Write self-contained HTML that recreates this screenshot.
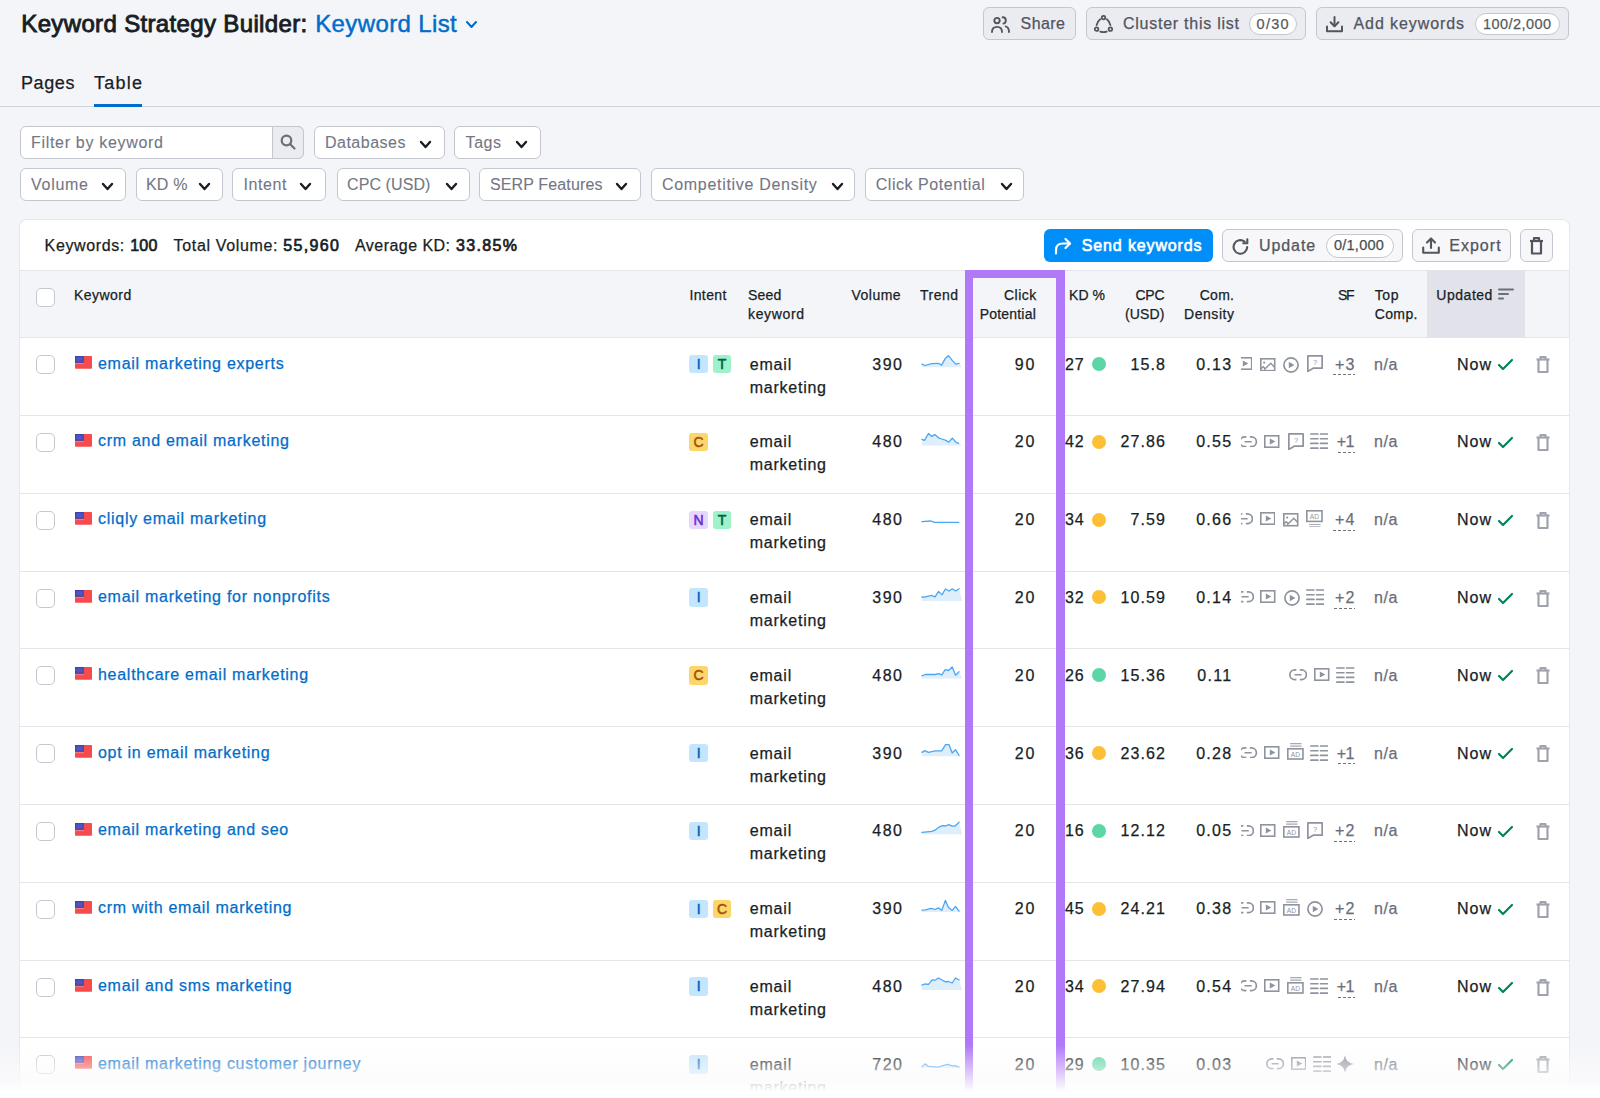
<!DOCTYPE html><html><head><meta charset="utf-8"><style>
html,body{margin:0;padding:0;}
body{width:1600px;height:1098px;overflow:hidden;position:relative;background:#f4f5f9;font-family:"Liberation Sans", sans-serif;}
.t{position:absolute;white-space:nowrap;line-height:1;-webkit-text-stroke-width:0.25px;}
svg{display:block;}
</style></head><body>
<div class="t" style="left:21.30px;top:12.18px;font-size:24px;font-weight:400;color:#181e25;letter-spacing:0.351px;-webkit-text-stroke:0.9px #181e25;">Keyword Strategy Builder:</div>
<div class="t" style="left:315.20px;top:12.18px;font-size:24px;font-weight:400;color:#006dca;letter-spacing:0.382px;-webkit-text-stroke:0.45px #006dca;">Keyword List</div>
<svg style="position:absolute;left:465px;top:19.5px;" width="13" height="9" viewBox="0 0 13 9" fill="none"><path d="M2 2 L6.5 7 L11 2" stroke="#006dca" stroke-width="2" stroke-linecap="round" stroke-linejoin="round"/></svg>
<div style="position:absolute;left:983px;top:7px;width:93px;height:33px;box-sizing:border-box;background:#ebecf1;border:1px solid #c4c7cf;border-radius:6px;"></div>
<svg style="position:absolute;left:991.25px;top:15.6px;" width="19" height="17" viewBox="0 0 19 17" fill="none"><g stroke="#52555e" stroke-width="1.9" stroke-linecap="round" fill="none"><circle cx="6" cy="4.6" r="2.7"/><path d="M1 16 C1 12.6 3 10.9 6 10.9 C9 10.9 11 12.6 11 16"/><path d="M11.6 1.2 C13.6 1.2 14.8 2.6 14.8 4.4 C14.8 6 13.8 7.2 12.4 7.6"/><path d="M14.7 10.4 C16.8 11.1 18 12.8 18 16"/></g></svg>
<div class="t" style="left:1020.60px;top:16.46px;font-size:16px;font-weight:400;color:#52555e;letter-spacing:0.428px;">Share</div>
<div style="position:absolute;left:1086px;top:7px;width:220px;height:33px;box-sizing:border-box;background:#ebecf1;border:1px solid #c4c7cf;border-radius:6px;"></div>
<svg style="position:absolute;left:1094.4px;top:14.75px;" width="19" height="18" viewBox="0 0 19 18" fill="none"><g stroke="#52555e" stroke-width="1.8" stroke-linecap="round" fill="none"><circle cx="9.5" cy="2.6" r="1.75"/><circle cx="2.6" cy="14.2" r="1.75"/><circle cx="16.4" cy="14.2" r="1.75"/><path d="M6.2 4.2 Q3.2 6.5 2.6 10.2"/><path d="M12.8 4.2 Q15.8 6.5 16.4 10.2"/><path d="M6.3 16.6 Q9.5 17.6 12.7 16.6"/></g></svg>
<div class="t" style="left:1123.00px;top:16.46px;font-size:16px;font-weight:400;color:#52555e;letter-spacing:0.749px;">Cluster this list</div>
<div style="position:absolute;left:1249px;top:12.5px;width:48px;height:22.5px;box-sizing:border-box;background:#fff;border:1px solid #c4c7cf;border-radius:12px;"></div>
<div class="t" style="left:1256.60px;top:16.73px;font-size:14.5px;font-weight:400;color:#181e25;letter-spacing:1.261px;opacity:.75">0/30</div>
<div style="position:absolute;left:1316px;top:7px;width:253px;height:33px;box-sizing:border-box;background:#ebecf1;border:1px solid #c4c7cf;border-radius:6px;"></div>
<svg style="position:absolute;left:1326px;top:16px;" width="17" height="16.5" viewBox="0 0 17 16.5" fill="none"><g stroke="#52555e" stroke-width="2" stroke-linecap="round" stroke-linejoin="round" fill="none"><path d="M8.5 1 V10"/><path d="M4.6 6.3 L8.5 10.2 L12.4 6.3"/><path d="M1 10.5 V15.3 H16 V10.5"/></g></svg>
<div class="t" style="left:1353.50px;top:16.46px;font-size:16px;font-weight:400;color:#52555e;letter-spacing:0.909px;">Add keywords</div>
<div style="position:absolute;left:1475px;top:12.5px;width:85px;height:22.5px;box-sizing:border-box;background:#fff;border:1px solid #c4c7cf;border-radius:12px;"></div>
<div class="t" style="left:1483.00px;top:16.73px;font-size:14.5px;font-weight:400;color:#181e25;letter-spacing:0.436px;opacity:.75">100/2,000</div>
<div class="t" style="left:21.00px;top:73.76px;font-size:18px;font-weight:400;color:#181e25;letter-spacing:0.593px;">Pages</div>
<div class="t" style="left:94.00px;top:73.76px;font-size:18px;font-weight:400;color:#181e25;letter-spacing:1.241px;">Table</div>
<div style="position:absolute;left:0px;top:106px;width:1600px;height:1px;box-sizing:border-box;background:#d1d4db;"></div>
<div style="position:absolute;left:94px;top:104px;width:48px;height:3px;box-sizing:border-box;background:#006dca;"></div>
<div style="position:absolute;left:20px;top:126px;width:284px;height:32.5px;box-sizing:border-box;background:#fff;border:1px solid #c4c7cf;border-radius:6px;"></div>
<div style="position:absolute;left:272px;top:126px;width:32px;height:32.5px;box-sizing:border-box;background:#ebecf1;border:1px solid #c4c7cf;border-left:1px solid #c4c7cf;border-radius:0 6px 6px 0;"></div>
<div class="t" style="left:31.00px;top:134.66px;font-size:16px;font-weight:400;color:#737784;letter-spacing:0.692px;-webkit-text-stroke-width:0.1px;">Filter by keyword</div>
<svg style="position:absolute;left:279px;top:133px;" width="18" height="18" viewBox="0 0 18 18" fill="none"><g stroke="#6c6e79" stroke-width="2.2" stroke-linecap="round"><circle cx="7.5" cy="7.5" r="4.8"/><path d="M11 11 L15.5 15.5"/></g></svg>
<div style="position:absolute;left:314px;top:126px;width:130.5px;height:32.5px;box-sizing:border-box;background:#fff;border:1px solid #c4c7cf;border-radius:6px;"></div>
<div class="t" style="left:325.00px;top:134.66px;font-size:16px;font-weight:400;color:#737784;letter-spacing:0.488px;-webkit-text-stroke-width:0.1px;">Databases</div>
<svg style="position:absolute;left:419px;top:139.5px;" width="13" height="9" viewBox="0 0 13 9" fill="none"><path d="M2 2 L6.5 7 L11 2" stroke="#181e25" stroke-width="2.4" stroke-linecap="round" stroke-linejoin="round"/></svg>
<div style="position:absolute;left:454px;top:126px;width:86.5px;height:32.5px;box-sizing:border-box;background:#fff;border:1px solid #c4c7cf;border-radius:6px;"></div>
<div class="t" style="left:465.60px;top:134.66px;font-size:16px;font-weight:400;color:#737784;letter-spacing:0.536px;-webkit-text-stroke-width:0.1px;">Tags</div>
<svg style="position:absolute;left:515px;top:139.5px;" width="13" height="9" viewBox="0 0 13 9" fill="none"><path d="M2 2 L6.5 7 L11 2" stroke="#181e25" stroke-width="2.4" stroke-linecap="round" stroke-linejoin="round"/></svg>
<div style="position:absolute;left:20px;top:168px;width:105.5px;height:32.5px;box-sizing:border-box;background:#fff;border:1px solid #c4c7cf;border-radius:6px;"></div>
<div class="t" style="left:31.10px;top:176.66px;font-size:16px;font-weight:400;color:#737784;letter-spacing:0.708px;-webkit-text-stroke-width:0.1px;">Volume</div>
<svg style="position:absolute;left:101px;top:181.5px;" width="13" height="9" viewBox="0 0 13 9" fill="none"><path d="M2 2 L6.5 7 L11 2" stroke="#181e25" stroke-width="2.4" stroke-linecap="round" stroke-linejoin="round"/></svg>
<div style="position:absolute;left:135.5px;top:168px;width:87.0px;height:32.5px;box-sizing:border-box;background:#fff;border:1px solid #c4c7cf;border-radius:6px;"></div>
<div class="t" style="left:145.90px;top:176.66px;font-size:16px;font-weight:400;color:#737784;letter-spacing:0.201px;-webkit-text-stroke-width:0.1px;">KD %</div>
<svg style="position:absolute;left:198px;top:181.5px;" width="13" height="9" viewBox="0 0 13 9" fill="none"><path d="M2 2 L6.5 7 L11 2" stroke="#181e25" stroke-width="2.4" stroke-linecap="round" stroke-linejoin="round"/></svg>
<div style="position:absolute;left:232px;top:168px;width:93.5px;height:32.5px;box-sizing:border-box;background:#fff;border:1px solid #c4c7cf;border-radius:6px;"></div>
<div class="t" style="left:243.60px;top:176.66px;font-size:16px;font-weight:400;color:#737784;letter-spacing:0.554px;-webkit-text-stroke-width:0.1px;">Intent</div>
<svg style="position:absolute;left:299px;top:181.5px;" width="13" height="9" viewBox="0 0 13 9" fill="none"><path d="M2 2 L6.5 7 L11 2" stroke="#181e25" stroke-width="2.4" stroke-linecap="round" stroke-linejoin="round"/></svg>
<div style="position:absolute;left:336.5px;top:168px;width:133.0px;height:32.5px;box-sizing:border-box;background:#fff;border:1px solid #c4c7cf;border-radius:6px;"></div>
<div class="t" style="left:347.00px;top:176.66px;font-size:16px;font-weight:400;color:#737784;letter-spacing:0.091px;-webkit-text-stroke-width:0.1px;">CPC (USD)</div>
<svg style="position:absolute;left:445px;top:181.5px;" width="13" height="9" viewBox="0 0 13 9" fill="none"><path d="M2 2 L6.5 7 L11 2" stroke="#181e25" stroke-width="2.4" stroke-linecap="round" stroke-linejoin="round"/></svg>
<div style="position:absolute;left:479px;top:168px;width:162px;height:32.5px;box-sizing:border-box;background:#fff;border:1px solid #c4c7cf;border-radius:6px;"></div>
<div class="t" style="left:490.00px;top:176.66px;font-size:16px;font-weight:400;color:#737784;letter-spacing:0.128px;-webkit-text-stroke-width:0.1px;">SERP Features</div>
<svg style="position:absolute;left:615px;top:181.5px;" width="13" height="9" viewBox="0 0 13 9" fill="none"><path d="M2 2 L6.5 7 L11 2" stroke="#181e25" stroke-width="2.4" stroke-linecap="round" stroke-linejoin="round"/></svg>
<div style="position:absolute;left:651px;top:168px;width:204px;height:32.5px;box-sizing:border-box;background:#fff;border:1px solid #c4c7cf;border-radius:6px;"></div>
<div class="t" style="left:662.00px;top:176.66px;font-size:16px;font-weight:400;color:#737784;letter-spacing:0.696px;-webkit-text-stroke-width:0.1px;">Competitive Density</div>
<svg style="position:absolute;left:831px;top:181.5px;" width="13" height="9" viewBox="0 0 13 9" fill="none"><path d="M2 2 L6.5 7 L11 2" stroke="#181e25" stroke-width="2.4" stroke-linecap="round" stroke-linejoin="round"/></svg>
<div style="position:absolute;left:865px;top:168px;width:159px;height:32.5px;box-sizing:border-box;background:#fff;border:1px solid #c4c7cf;border-radius:6px;"></div>
<div class="t" style="left:875.70px;top:176.66px;font-size:16px;font-weight:400;color:#737784;letter-spacing:0.552px;-webkit-text-stroke-width:0.1px;">Click Potential</div>
<svg style="position:absolute;left:1000px;top:181.5px;" width="13" height="9" viewBox="0 0 13 9" fill="none"><path d="M2 2 L6.5 7 L11 2" stroke="#181e25" stroke-width="2.4" stroke-linecap="round" stroke-linejoin="round"/></svg>
<div style="position:absolute;left:19px;top:219px;width:1551px;height:891px;box-sizing:border-box;background:#fff;border:1px solid #e6e7ec;border-radius:8px 8px 0 0;"></div>
<div class="t" style="left:44.60px;top:237.96px;font-size:16px;font-weight:400;color:#181e25;letter-spacing:0.626px;">Keywords:</div>
<div class="t" style="left:130.30px;top:237.96px;font-size:16px;font-weight:400;color:#181e25;letter-spacing:0.156px;-webkit-text-stroke:0.7px #181e25;">100</div>
<div class="t" style="left:173.60px;top:237.96px;font-size:16px;font-weight:400;color:#181e25;letter-spacing:0.654px;">Total Volume:</div>
<div class="t" style="left:283.30px;top:237.96px;font-size:16px;font-weight:400;color:#181e25;letter-spacing:1.351px;-webkit-text-stroke:0.7px #181e25;">55,960</div>
<div class="t" style="left:355.00px;top:237.96px;font-size:16px;font-weight:400;color:#181e25;letter-spacing:0.458px;">Average KD:</div>
<div class="t" style="left:455.90px;top:237.96px;font-size:16px;font-weight:400;color:#181e25;letter-spacing:1.386px;-webkit-text-stroke:0.7px #181e25;">33.85%</div>
<div style="position:absolute;left:1044px;top:229px;width:168.5px;height:33px;box-sizing:border-box;background:#008ff8;border-radius:6px;"></div>
<svg style="position:absolute;left:1053px;top:236px;" width="20" height="20" viewBox="0 0 20 20" fill="none"><g stroke="#fff" stroke-width="2.2" stroke-linecap="round" stroke-linejoin="round"><path d="M3 17.5 V14 C3 9.5 6 7.5 10 7.5 H17"/><path d="M12.5 3 L17 7.5 L12.5 12"/></g></svg>
<div class="t" style="left:1081.80px;top:237.96px;font-size:16px;font-weight:400;color:#fff;letter-spacing:0.859px;-webkit-text-stroke:0.6px #fff;">Send keywords</div>
<div style="position:absolute;left:1222px;top:229px;width:180.5px;height:33px;box-sizing:border-box;background:#f7f7f9;border:1px solid #c4c7cf;border-radius:6px;"></div>
<svg style="position:absolute;left:1231.5px;top:237.5px;" width="18" height="17" viewBox="0 0 18 17" fill="none"><g stroke="#52555e" stroke-width="2.1" stroke-linecap="round" stroke-linejoin="round" fill="none"><path d="M15.2 9 A6.8 6.8 0 1 1 12.6 3.6"/><path d="M15.3 1.2 V5.2 H11.3"/></g></svg>
<div class="t" style="left:1258.90px;top:237.96px;font-size:16px;font-weight:400;color:#52555e;letter-spacing:0.940px;">Update</div>
<div style="position:absolute;left:1325.5px;top:233.5px;width:68.0px;height:24.0px;box-sizing:border-box;background:#fff;border:1px solid #c4c7cf;border-radius:12px;"></div>
<div class="t" style="left:1333.90px;top:238.23px;font-size:14.5px;font-weight:400;color:#181e25;letter-spacing:0.271px;opacity:.8">0/1,000</div>
<div style="position:absolute;left:1412px;top:229px;width:99px;height:33px;box-sizing:border-box;background:#f7f7f9;border:1px solid #c4c7cf;border-radius:6px;"></div>
<svg style="position:absolute;left:1422px;top:237px;" width="18" height="17" viewBox="0 0 18 17" fill="none"><g stroke="#52555e" stroke-width="2.1" stroke-linecap="round" stroke-linejoin="round" fill="none"><path d="M9 11 V1.8"/><path d="M5 5.6 L9 1.6 L13 5.6"/><path d="M1.2 10.6 V15.8 H16.8 V10.6"/></g></svg>
<div class="t" style="left:1449.20px;top:237.96px;font-size:16px;font-weight:400;color:#52555e;letter-spacing:1.032px;">Export</div>
<div style="position:absolute;left:1520px;top:229px;width:33px;height:33px;box-sizing:border-box;background:#f7f7f9;border:1px solid #c4c7cf;border-radius:6px;"></div>
<svg style="position:absolute;left:1526px;top:235px;" width="21" height="22" viewBox="0 0 21 22" fill="none"><g stroke="#52555e" stroke-width="2.2" stroke-linejoin="round"><path d="M4 6 H17"/><path d="M8 5.5 V3.2 H13 V5.5"/><path d="M6 6 V18.5 H15 V6"/></g></svg>
<div style="position:absolute;left:20px;top:270px;width:1549px;height:1px;box-sizing:border-box;background:#e4e5ea;"></div>
<div style="position:absolute;left:20px;top:271px;width:1549px;height:66px;box-sizing:border-box;background:#f4f5f9;"></div>
<div style="position:absolute;left:1427px;top:271px;width:98px;height:66px;box-sizing:border-box;background:#e1e2ea;"></div>
<div style="position:absolute;left:20px;top:337px;width:1549px;height:1px;box-sizing:border-box;background:#e4e5ea;"></div>
<div style="position:absolute;left:36px;top:288px;width:19px;height:19px;box-sizing:border-box;background:#fff;border:1.5px solid #c4c7cf;border-radius:5px;"></div>
<div class="t" style="left:73.90px;top:288.15px;font-size:14px;font-weight:400;color:#181e25;letter-spacing:0.471px;">Keyword</div>
<div class="t" style="left:689.40px;top:288.15px;font-size:14px;font-weight:400;color:#181e25;letter-spacing:0.394px;">Intent</div>
<div class="t" style="left:748.00px;top:288.15px;font-size:14px;font-weight:400;color:#181e25;letter-spacing:0.237px;">Seed</div>
<div class="t" style="left:748.00px;top:306.75px;font-size:14px;font-weight:400;color:#181e25;letter-spacing:0.644px;">keyword</div>
<div class="t" style="left:851.60px;top:288.15px;font-size:14px;font-weight:400;color:#181e25;letter-spacing:0.462px;">Volume</div>
<div class="t" style="left:920.00px;top:288.15px;font-size:14px;font-weight:400;color:#181e25;letter-spacing:0.487px;">Trend</div>
<div class="t" style="left:1004.00px;top:288.15px;font-size:14px;font-weight:400;color:#181e25;letter-spacing:0.459px;">Click</div>
<div class="t" style="left:979.70px;top:306.75px;font-size:14px;font-weight:400;color:#181e25;letter-spacing:0.201px;">Potential</div>
<div class="t" style="left:1069.00px;top:288.15px;font-size:14px;font-weight:400;color:#181e25;letter-spacing:0.072px;">KD %</div>
<div class="t" style="left:1135.50px;top:288.15px;font-size:14px;font-weight:400;color:#181e25;letter-spacing:-0.277px;">CPC</div>
<div class="t" style="left:1125.00px;top:306.75px;font-size:14px;font-weight:400;color:#181e25;letter-spacing:0.155px;">(USD)</div>
<div class="t" style="left:1199.70px;top:288.15px;font-size:14px;font-weight:400;color:#181e25;letter-spacing:0.285px;">Com.</div>
<div class="t" style="left:1184.00px;top:306.75px;font-size:14px;font-weight:400;color:#181e25;letter-spacing:0.554px;">Density</div>
<div class="t" style="left:1338.00px;top:288.15px;font-size:14px;font-weight:400;color:#181e25;letter-spacing:-1.392px;">SF</div>
<div class="t" style="left:1374.70px;top:288.15px;font-size:14px;font-weight:400;color:#181e25;letter-spacing:0.616px;">Top</div>
<div class="t" style="left:1374.70px;top:306.75px;font-size:14px;font-weight:400;color:#181e25;letter-spacing:0.392px;">Comp.</div>
<div class="t" style="left:1436.30px;top:288.15px;font-size:14px;font-weight:400;color:#181e25;letter-spacing:0.528px;">Updated</div>
<svg style="position:absolute;left:1498px;top:287.5px;" width="17" height="12" viewBox="0 0 17 12" fill="none"><g stroke="#6c6e79" stroke-width="2" stroke-linecap="round"><path d="M1 1.5 H15"/><path d="M1 6 H10"/><path d="M1 10.5 H5"/></g></svg>
<div style="position:absolute;left:36px;top:355.1px;width:19px;height:19.0px;box-sizing:border-box;background:#fff;border:1.5px solid #c4c7cf;border-radius:5px;"></div>
<svg style="position:absolute;left:75px;top:356.1px;" width="17" height="13" viewBox="0 0 17 13" fill="none"><rect width="17" height="12.7" rx="0.8" fill="#f54b4d"/><rect x="0" y="7.3" width="9" height="0.8" fill="#f88"/><rect width="8.8" height="6.8" fill="#3f42b4"/><rect x="1.2" y="1.2" width="6.4" height="4.4" fill="#5255bd"/></svg>
<div class="t" style="left:98.00px;top:355.56px;font-size:16px;font-weight:400;color:#006dca;letter-spacing:0.720px;">email marketing experts</div>
<div style="position:absolute;left:689.4px;top:354.90000000000003px;width:18.5px;height:18.5px;border-radius:3px;background:#c4e5fe;color:#0a5dc2;font-size:14px;font-weight:400;-webkit-text-stroke:0.55px #0a5dc2;line-height:19px;text-align:center;">I</div>
<div style="position:absolute;left:712.9px;top:354.90000000000003px;width:18.5px;height:18.5px;border-radius:3px;background:#9ef2c9;color:#00604b;font-size:14px;font-weight:400;-webkit-text-stroke:0.55px #00604b;line-height:19px;text-align:center;">T</div>
<div class="t" style="left:749.80px;top:356.56px;font-size:16px;font-weight:400;color:#181e25;letter-spacing:0.800px;">email</div>
<div class="t" style="left:749.80px;top:379.56px;font-size:16px;font-weight:400;color:#181e25;letter-spacing:0.743px;">marketing</div>
<div class="t" style="left:872.31px;top:356.56px;font-size:16px;font-weight:400;color:#181e25;letter-spacing:1.500px;">390</div>
<svg style="position:absolute;left:915px;top:340px;" width="50" height="40" viewBox="0 0 50 40" fill="none"><polygon points="6.9,24.1 10.2,25.5 16.4,23.7 23.3,23.3 26.6,25.1 30.2,18.6 33.5,15.7 37.2,20.4 40.8,24.1 44.1,23.3 47,27.3 6.9,27.3" fill="#dfeefb"/><polyline points="6.9,24.1 10.2,25.5 16.4,23.7 23.3,23.3 26.6,25.1 30.2,18.6 33.5,15.7 37.2,20.4 40.8,24.1 44.1,23.3" stroke="#4aa6f4" stroke-width="1.3" stroke-linejoin="round" stroke-linecap="round" fill="none"/></svg>
<div class="t" style="left:1014.71px;top:356.56px;font-size:16px;font-weight:400;color:#181e25;letter-spacing:2.000px;">90</div>
<div class="t" style="left:1065.00px;top:356.56px;font-size:16px;font-weight:400;color:#181e25;letter-spacing:0.800px;">27</div>
<div style="position:absolute;left:1092px;top:356.90000000000003px;width:14px;height:14px;border-radius:50%;background:#5cd6a5;"></div>
<div class="t" style="left:1130.56px;top:356.56px;font-size:16px;font-weight:400;color:#181e25;letter-spacing:1.100px;">15.8</div>
<div class="t" style="left:1196.16px;top:356.56px;font-size:16px;font-weight:400;color:#181e25;letter-spacing:1.300px;">0.13</div>
<div class="t" style="left:1334.96px;top:356.56px;font-size:16px;font-weight:400;color:#6c6e79;letter-spacing:1.300px;">+3</div>
<div style="position:absolute;left:1333.4px;top:374.1px;width:21.3px;height:1px;background:repeating-linear-gradient(to right,#6f727d 0 3px,transparent 3px 5px);"></div>
<div style="position:absolute;left:1241px;top:347.1px;width:119px;height:40px;overflow:hidden;">
<svg style="position:absolute;left:-4.35px;top:9.75px;" width="15.5" height="13" viewBox="0 0 15.5 13" fill="none"><rect x="0.8" y="0.8" width="13.9" height="11.4" stroke="#8f939e" stroke-width="1.6"/><path d="M5.8 3.4 L11.4 6.5 L5.8 9.6 Z" fill="#8f939e"/></svg>
<svg style="position:absolute;left:19.15px;top:10.5px;" width="15.5" height="13.5" viewBox="0 0 15.5 13.5" fill="none"><rect x="0.8" y="0.8" width="13.9" height="11.9" stroke="#8f939e" stroke-width="1.6"/><path d="M1.2 10.6 L3.2 8.8 L5.3 10.8 M4.2 11.8 L10.8 5.3 L14.3 9" stroke="#8f939e" stroke-width="1.5"/><circle cx="4.2" cy="4.6" r="1.1" fill="#8f939e"/></svg>
<svg style="position:absolute;left:42.40px;top:9.5px;" width="16" height="16" viewBox="0 0 16 16" fill="none"><circle cx="8" cy="8" r="7.1" stroke="#8f939e" stroke-width="1.7"/><path d="M5.8 4.8 L11.4 8 L5.8 11.2 Z" fill="#8f939e"/></svg>
<svg style="position:absolute;left:65.90px;top:8.25px;" width="16" height="17" viewBox="0 0 16 17" fill="none"><path d="M0.85 0.85 H15.15 V13.2 H6.2 L0.85 16.4 Z" stroke="#8f939e" stroke-width="1.7" stroke-linejoin="round"/><text x="8.2" y="10.2" font-size="7.5" text-anchor="middle" fill="#8f939e" font-family="Liberation Sans">?</text></svg>
</div>
<div class="t" style="left:1374.00px;top:356.56px;font-size:16px;font-weight:400;color:#6c6e79;letter-spacing:0.522px;">n/a</div>
<div class="t" style="left:1457.00px;top:356.56px;font-size:16px;font-weight:400;color:#181e25;letter-spacing:0.976px;">Now</div>
<svg style="position:absolute;left:1497px;top:358.1px;" width="17" height="13" viewBox="0 0 17 13" fill="none"><path d="M2 7 L6 11 L15 2" stroke="#00845a" stroke-width="2.2" stroke-linecap="round" stroke-linejoin="round"/></svg>
<svg style="position:absolute;left:1534px;top:355.1px;" width="18" height="20" viewBox="0 0 18 20" fill="none"><g stroke="#a0a3ad" stroke-width="2.2" stroke-linejoin="round"><path d="M2.5 4.5 H15.5"/><path d="M6.5 4 V2 H11.5 V4"/><path d="M4.5 4.5 V17 H13.5 V4.5"/></g></svg>
<div style="position:absolute;left:20px;top:414.9px;width:1549px;height:1.0px;box-sizing:border-box;background:#e4e5ea;"></div>
<div style="position:absolute;left:36px;top:432.9px;width:19px;height:19.0px;box-sizing:border-box;background:#fff;border:1.5px solid #c4c7cf;border-radius:5px;"></div>
<svg style="position:absolute;left:75px;top:433.9px;" width="17" height="13" viewBox="0 0 17 13" fill="none"><rect width="17" height="12.7" rx="0.8" fill="#f54b4d"/><rect x="0" y="7.3" width="9" height="0.8" fill="#f88"/><rect width="8.8" height="6.8" fill="#3f42b4"/><rect x="1.2" y="1.2" width="6.4" height="4.4" fill="#5255bd"/></svg>
<div class="t" style="left:98.00px;top:433.36px;font-size:16px;font-weight:400;color:#006dca;letter-spacing:0.720px;">crm and email marketing</div>
<div style="position:absolute;left:689.4px;top:432.7px;width:18.5px;height:18.5px;border-radius:3px;background:#fcd66b;color:#a3530a;font-size:14px;font-weight:400;-webkit-text-stroke:0.55px #a3530a;line-height:19px;text-align:center;">C</div>
<div class="t" style="left:749.80px;top:434.36px;font-size:16px;font-weight:400;color:#181e25;letter-spacing:0.800px;">email</div>
<div class="t" style="left:749.80px;top:457.36px;font-size:16px;font-weight:400;color:#181e25;letter-spacing:0.743px;">marketing</div>
<div class="t" style="left:872.31px;top:434.36px;font-size:16px;font-weight:400;color:#181e25;letter-spacing:1.500px;">480</div>
<svg style="position:absolute;left:915px;top:420px;" width="50" height="40" viewBox="0 0 50 40" fill="none"><polygon points="6.9,19.3 9.5,20.4 13.5,13.5 16.8,16.4 19.9,14.6 23.7,17.9 26.6,19.0 31.0,20.4 33.5,22.2 37.4,18.2 40.8,22.2 43.7,23.3 47,25.5 6.9,25.5" fill="#dfeefb"/><polyline points="6.9,19.3 9.5,20.4 13.5,13.5 16.8,16.4 19.9,14.6 23.7,17.9 26.6,19.0 31.0,20.4 33.5,22.2 37.4,18.2 40.8,22.2 43.7,23.3" stroke="#4aa6f4" stroke-width="1.3" stroke-linejoin="round" stroke-linecap="round" fill="none"/></svg>
<div class="t" style="left:1014.71px;top:434.36px;font-size:16px;font-weight:400;color:#181e25;letter-spacing:2.000px;">20</div>
<div class="t" style="left:1065.00px;top:434.36px;font-size:16px;font-weight:400;color:#181e25;letter-spacing:0.800px;">42</div>
<div style="position:absolute;left:1092px;top:434.7px;width:14px;height:14px;border-radius:50%;background:#fdbf33;"></div>
<div class="t" style="left:1120.57px;top:434.36px;font-size:16px;font-weight:400;color:#181e25;letter-spacing:1.100px;">27.86</div>
<div class="t" style="left:1196.16px;top:434.36px;font-size:16px;font-weight:400;color:#181e25;letter-spacing:1.300px;">0.55</div>
<div class="t" style="left:1336.86px;top:434.36px;font-size:16px;font-weight:400;color:#6c6e79;letter-spacing:-0.600px;">+1</div>
<div style="position:absolute;left:1337.5px;top:451.9px;width:17.2px;height:1px;background:repeating-linear-gradient(to right,#6f727d 0 3px,transparent 3px 5px);"></div>
<div style="position:absolute;left:1241px;top:424.9px;width:119px;height:40px;overflow:hidden;">
<svg style="position:absolute;left:-1.62px;top:10.75px;" width="18.25" height="11.5" viewBox="0 0 18.25 11.5" fill="none"><path d="M7.4 0.85 H5.75 A4.9 4.9 0 0 0 5.75 10.65 H7.4" stroke="#8f939e" stroke-width="1.7"/><path d="M10.85 0.85 H12.5 A4.9 4.9 0 0 1 12.5 10.65 H10.85" stroke="#8f939e" stroke-width="1.7"/><path d="M6.2 5.75 H12" stroke="#8f939e" stroke-width="1.7" stroke-linecap="round"/></svg>
<svg style="position:absolute;left:23.25px;top:9.75px;" width="15.5" height="13" viewBox="0 0 15.5 13" fill="none"><rect x="0.8" y="0.8" width="13.9" height="11.4" stroke="#8f939e" stroke-width="1.6"/><path d="M5.8 3.4 L11.4 6.5 L5.8 9.6 Z" fill="#8f939e"/></svg>
<svg style="position:absolute;left:46.50px;top:8.25px;" width="16" height="17" viewBox="0 0 16 17" fill="none"><path d="M0.85 0.85 H15.15 V13.2 H6.2 L0.85 16.4 Z" stroke="#8f939e" stroke-width="1.7" stroke-linejoin="round"/><text x="8.2" y="10.2" font-size="7.5" text-anchor="middle" fill="#8f939e" font-family="Liberation Sans">?</text></svg>
<svg style="position:absolute;left:68.75px;top:8.5px;" width="18.5" height="16" viewBox="0 0 18.5 16" fill="none"><path d="M0.85 1 H7.9 M10.6 1 H17.65 M0.85 5.75 H7.9 M10.6 5.75 H17.65 M0.85 10.4 H7.9 M10.6 10.4 H17.65 M0.85 15.2 H7.9 M10.6 15.2 H17.65" stroke="#8f939e" stroke-width="1.7" stroke-linecap="round"/></svg>
</div>
<div class="t" style="left:1374.00px;top:434.36px;font-size:16px;font-weight:400;color:#6c6e79;letter-spacing:0.522px;">n/a</div>
<div class="t" style="left:1457.00px;top:434.36px;font-size:16px;font-weight:400;color:#181e25;letter-spacing:0.976px;">Now</div>
<svg style="position:absolute;left:1497px;top:435.9px;" width="17" height="13" viewBox="0 0 17 13" fill="none"><path d="M2 7 L6 11 L15 2" stroke="#00845a" stroke-width="2.2" stroke-linecap="round" stroke-linejoin="round"/></svg>
<svg style="position:absolute;left:1534px;top:432.9px;" width="18" height="20" viewBox="0 0 18 20" fill="none"><g stroke="#a0a3ad" stroke-width="2.2" stroke-linejoin="round"><path d="M2.5 4.5 H15.5"/><path d="M6.5 4 V2 H11.5 V4"/><path d="M4.5 4.5 V17 H13.5 V4.5"/></g></svg>
<div style="position:absolute;left:20px;top:492.7px;width:1549px;height:1.0px;box-sizing:border-box;background:#e4e5ea;"></div>
<div style="position:absolute;left:36px;top:510.7px;width:19px;height:19.000000000000057px;box-sizing:border-box;background:#fff;border:1.5px solid #c4c7cf;border-radius:5px;"></div>
<svg style="position:absolute;left:75px;top:511.7px;" width="17" height="13" viewBox="0 0 17 13" fill="none"><rect width="17" height="12.7" rx="0.8" fill="#f54b4d"/><rect x="0" y="7.3" width="9" height="0.8" fill="#f88"/><rect width="8.8" height="6.8" fill="#3f42b4"/><rect x="1.2" y="1.2" width="6.4" height="4.4" fill="#5255bd"/></svg>
<div class="t" style="left:98.00px;top:511.16px;font-size:16px;font-weight:400;color:#006dca;letter-spacing:0.720px;">cliqly email marketing</div>
<div style="position:absolute;left:689.4px;top:510.5px;width:18.5px;height:18.5px;border-radius:3px;background:#e6d8fc;color:#6b2edb;font-size:14px;font-weight:400;-webkit-text-stroke:0.55px #6b2edb;line-height:19px;text-align:center;">N</div>
<div style="position:absolute;left:712.9px;top:510.5px;width:18.5px;height:18.5px;border-radius:3px;background:#9ef2c9;color:#00604b;font-size:14px;font-weight:400;-webkit-text-stroke:0.55px #00604b;line-height:19px;text-align:center;">T</div>
<div class="t" style="left:749.80px;top:512.16px;font-size:16px;font-weight:400;color:#181e25;letter-spacing:0.800px;">email</div>
<div class="t" style="left:749.80px;top:535.16px;font-size:16px;font-weight:400;color:#181e25;letter-spacing:0.743px;">marketing</div>
<div class="t" style="left:872.31px;top:512.16px;font-size:16px;font-weight:400;color:#181e25;letter-spacing:1.500px;">480</div>
<svg style="position:absolute;left:915px;top:498px;" width="50" height="40" viewBox="0 0 50 40" fill="none"><polyline points="6.9,23.7 16.0,23.0 19.3,24.4 43.7,24.4" stroke="#4aa6f4" stroke-width="1.3" stroke-linejoin="round" stroke-linecap="round" fill="none"/></svg>
<div class="t" style="left:1014.71px;top:512.16px;font-size:16px;font-weight:400;color:#181e25;letter-spacing:2.000px;">20</div>
<div class="t" style="left:1065.00px;top:512.16px;font-size:16px;font-weight:400;color:#181e25;letter-spacing:0.800px;">34</div>
<div style="position:absolute;left:1092px;top:512.5px;width:14px;height:14px;border-radius:50%;background:#fdbf33;"></div>
<div class="t" style="left:1130.56px;top:512.16px;font-size:16px;font-weight:400;color:#181e25;letter-spacing:1.100px;">7.59</div>
<div class="t" style="left:1196.16px;top:512.16px;font-size:16px;font-weight:400;color:#181e25;letter-spacing:1.300px;">0.66</div>
<div class="t" style="left:1334.96px;top:512.16px;font-size:16px;font-weight:400;color:#6c6e79;letter-spacing:1.300px;">+4</div>
<div style="position:absolute;left:1333.2px;top:529.7px;width:21.5px;height:1px;background:repeating-linear-gradient(to right,#6f727d 0 3px,transparent 3px 5px);"></div>
<div style="position:absolute;left:1241px;top:502.7px;width:119px;height:40px;overflow:hidden;">
<svg style="position:absolute;left:-5.92px;top:10.75px;" width="18.25" height="11.5" viewBox="0 0 18.25 11.5" fill="none"><path d="M7.4 0.85 H5.75 A4.9 4.9 0 0 0 5.75 10.65 H7.4" stroke="#8f939e" stroke-width="1.7"/><path d="M10.85 0.85 H12.5 A4.9 4.9 0 0 1 12.5 10.65 H10.85" stroke="#8f939e" stroke-width="1.7"/><path d="M6.2 5.75 H12" stroke="#8f939e" stroke-width="1.7" stroke-linecap="round"/></svg>
<svg style="position:absolute;left:18.95px;top:9.75px;" width="15.5" height="13" viewBox="0 0 15.5 13" fill="none"><rect x="0.8" y="0.8" width="13.9" height="11.4" stroke="#8f939e" stroke-width="1.6"/><path d="M5.8 3.4 L11.4 6.5 L5.8 9.6 Z" fill="#8f939e"/></svg>
<svg style="position:absolute;left:42.45px;top:10.5px;" width="15.5" height="13.5" viewBox="0 0 15.5 13.5" fill="none"><rect x="0.8" y="0.8" width="13.9" height="11.9" stroke="#8f939e" stroke-width="1.6"/><path d="M1.2 10.6 L3.2 8.8 L5.3 10.8 M4.2 11.8 L10.8 5.3 L14.3 9" stroke="#8f939e" stroke-width="1.5"/><circle cx="4.2" cy="4.6" r="1.1" fill="#8f939e"/></svg>
<svg style="position:absolute;left:65.30px;top:7.800000000000001px;" width="16.8" height="17" viewBox="0 0 16.8 17" fill="none"><rect x="0.8" y="0.8" width="15.2" height="10.6" stroke="#8f939e" stroke-width="1.6"/><text x="8.4" y="8.6" font-size="6.6" text-anchor="middle" fill="#8f939e" font-family="Liberation Sans">AD</text><path d="M3.2 14.5 H14.5 M3.2 16.8 H14.5" stroke="#8f939e" stroke-width="1.1" opacity="0.8"/></svg>
</div>
<div class="t" style="left:1374.00px;top:512.16px;font-size:16px;font-weight:400;color:#6c6e79;letter-spacing:0.522px;">n/a</div>
<div class="t" style="left:1457.00px;top:512.16px;font-size:16px;font-weight:400;color:#181e25;letter-spacing:0.976px;">Now</div>
<svg style="position:absolute;left:1497px;top:513.7px;" width="17" height="13" viewBox="0 0 17 13" fill="none"><path d="M2 7 L6 11 L15 2" stroke="#00845a" stroke-width="2.2" stroke-linecap="round" stroke-linejoin="round"/></svg>
<svg style="position:absolute;left:1534px;top:510.7px;" width="18" height="20" viewBox="0 0 18 20" fill="none"><g stroke="#a0a3ad" stroke-width="2.2" stroke-linejoin="round"><path d="M2.5 4.5 H15.5"/><path d="M6.5 4 V2 H11.5 V4"/><path d="M4.5 4.5 V17 H13.5 V4.5"/></g></svg>
<div style="position:absolute;left:20px;top:570.5px;width:1549px;height:1.0px;box-sizing:border-box;background:#e4e5ea;"></div>
<div style="position:absolute;left:36px;top:588.5px;width:19px;height:19.0px;box-sizing:border-box;background:#fff;border:1.5px solid #c4c7cf;border-radius:5px;"></div>
<svg style="position:absolute;left:75px;top:589.5px;" width="17" height="13" viewBox="0 0 17 13" fill="none"><rect width="17" height="12.7" rx="0.8" fill="#f54b4d"/><rect x="0" y="7.3" width="9" height="0.8" fill="#f88"/><rect width="8.8" height="6.8" fill="#3f42b4"/><rect x="1.2" y="1.2" width="6.4" height="4.4" fill="#5255bd"/></svg>
<div class="t" style="left:98.00px;top:588.96px;font-size:16px;font-weight:400;color:#006dca;letter-spacing:0.720px;">email marketing for nonprofits</div>
<div style="position:absolute;left:689.4px;top:588.3px;width:18.5px;height:18.5px;border-radius:3px;background:#c4e5fe;color:#0a5dc2;font-size:14px;font-weight:400;-webkit-text-stroke:0.55px #0a5dc2;line-height:19px;text-align:center;">I</div>
<div class="t" style="left:749.80px;top:589.96px;font-size:16px;font-weight:400;color:#181e25;letter-spacing:0.800px;">email</div>
<div class="t" style="left:749.80px;top:612.96px;font-size:16px;font-weight:400;color:#181e25;letter-spacing:0.743px;">marketing</div>
<div class="t" style="left:872.31px;top:589.96px;font-size:16px;font-weight:400;color:#181e25;letter-spacing:1.500px;">390</div>
<svg style="position:absolute;left:915px;top:575px;" width="50" height="40" viewBox="0 0 50 40" fill="none"><polygon points="6.9,22.0 9.5,22.2 16.4,20.4 20.0,21.9 23.5,16.4 27.0,19.9 30.4,14.0 34.1,16.0 37.2,13.8 40.6,16.0 44.1,13.8 47,25.9 6.9,25.9" fill="#dfeefb"/><polyline points="6.9,22.0 9.5,22.2 16.4,20.4 20.0,21.9 23.5,16.4 27.0,19.9 30.4,14.0 34.1,16.0 37.2,13.8 40.6,16.0 44.1,13.8" stroke="#4aa6f4" stroke-width="1.3" stroke-linejoin="round" stroke-linecap="round" fill="none"/></svg>
<div class="t" style="left:1014.71px;top:589.96px;font-size:16px;font-weight:400;color:#181e25;letter-spacing:2.000px;">20</div>
<div class="t" style="left:1065.00px;top:589.96px;font-size:16px;font-weight:400;color:#181e25;letter-spacing:0.800px;">32</div>
<div style="position:absolute;left:1092px;top:590.3px;width:14px;height:14px;border-radius:50%;background:#fdbf33;"></div>
<div class="t" style="left:1120.57px;top:589.96px;font-size:16px;font-weight:400;color:#181e25;letter-spacing:1.100px;">10.59</div>
<div class="t" style="left:1196.16px;top:589.96px;font-size:16px;font-weight:400;color:#181e25;letter-spacing:1.300px;">0.14</div>
<div class="t" style="left:1334.96px;top:589.96px;font-size:16px;font-weight:400;color:#6c6e79;letter-spacing:1.300px;">+2</div>
<div style="position:absolute;left:1333.7px;top:607.5px;width:21.0px;height:1px;background:repeating-linear-gradient(to right,#6f727d 0 3px,transparent 3px 5px);"></div>
<div style="position:absolute;left:1241px;top:580.5px;width:119px;height:40px;overflow:hidden;">
<svg style="position:absolute;left:-5.42px;top:10.75px;" width="18.25" height="11.5" viewBox="0 0 18.25 11.5" fill="none"><path d="M7.4 0.85 H5.75 A4.9 4.9 0 0 0 5.75 10.65 H7.4" stroke="#8f939e" stroke-width="1.7"/><path d="M10.85 0.85 H12.5 A4.9 4.9 0 0 1 12.5 10.65 H10.85" stroke="#8f939e" stroke-width="1.7"/><path d="M6.2 5.75 H12" stroke="#8f939e" stroke-width="1.7" stroke-linecap="round"/></svg>
<svg style="position:absolute;left:19.45px;top:9.75px;" width="15.5" height="13" viewBox="0 0 15.5 13" fill="none"><rect x="0.8" y="0.8" width="13.9" height="11.4" stroke="#8f939e" stroke-width="1.6"/><path d="M5.8 3.4 L11.4 6.5 L5.8 9.6 Z" fill="#8f939e"/></svg>
<svg style="position:absolute;left:42.70px;top:9.5px;" width="16" height="16" viewBox="0 0 16 16" fill="none"><circle cx="8" cy="8" r="7.1" stroke="#8f939e" stroke-width="1.7"/><path d="M5.8 4.8 L11.4 8 L5.8 11.2 Z" fill="#8f939e"/></svg>
<svg style="position:absolute;left:64.95px;top:8.5px;" width="18.5" height="16" viewBox="0 0 18.5 16" fill="none"><path d="M0.85 1 H7.9 M10.6 1 H17.65 M0.85 5.75 H7.9 M10.6 5.75 H17.65 M0.85 10.4 H7.9 M10.6 10.4 H17.65 M0.85 15.2 H7.9 M10.6 15.2 H17.65" stroke="#8f939e" stroke-width="1.7" stroke-linecap="round"/></svg>
</div>
<div class="t" style="left:1374.00px;top:589.96px;font-size:16px;font-weight:400;color:#6c6e79;letter-spacing:0.522px;">n/a</div>
<div class="t" style="left:1457.00px;top:589.96px;font-size:16px;font-weight:400;color:#181e25;letter-spacing:0.976px;">Now</div>
<svg style="position:absolute;left:1497px;top:591.5px;" width="17" height="13" viewBox="0 0 17 13" fill="none"><path d="M2 7 L6 11 L15 2" stroke="#00845a" stroke-width="2.2" stroke-linecap="round" stroke-linejoin="round"/></svg>
<svg style="position:absolute;left:1534px;top:588.5px;" width="18" height="20" viewBox="0 0 18 20" fill="none"><g stroke="#a0a3ad" stroke-width="2.2" stroke-linejoin="round"><path d="M2.5 4.5 H15.5"/><path d="M6.5 4 V2 H11.5 V4"/><path d="M4.5 4.5 V17 H13.5 V4.5"/></g></svg>
<div style="position:absolute;left:20px;top:648.3px;width:1549px;height:1.0px;box-sizing:border-box;background:#e4e5ea;"></div>
<div style="position:absolute;left:36px;top:666.3px;width:19px;height:19.0px;box-sizing:border-box;background:#fff;border:1.5px solid #c4c7cf;border-radius:5px;"></div>
<svg style="position:absolute;left:75px;top:667.3px;" width="17" height="13" viewBox="0 0 17 13" fill="none"><rect width="17" height="12.7" rx="0.8" fill="#f54b4d"/><rect x="0" y="7.3" width="9" height="0.8" fill="#f88"/><rect width="8.8" height="6.8" fill="#3f42b4"/><rect x="1.2" y="1.2" width="6.4" height="4.4" fill="#5255bd"/></svg>
<div class="t" style="left:98.00px;top:666.76px;font-size:16px;font-weight:400;color:#006dca;letter-spacing:0.720px;">healthcare email marketing</div>
<div style="position:absolute;left:689.4px;top:666.0999999999999px;width:18.5px;height:18.5px;border-radius:3px;background:#fcd66b;color:#a3530a;font-size:14px;font-weight:400;-webkit-text-stroke:0.55px #a3530a;line-height:19px;text-align:center;">C</div>
<div class="t" style="left:749.80px;top:667.76px;font-size:16px;font-weight:400;color:#181e25;letter-spacing:0.800px;">email</div>
<div class="t" style="left:749.80px;top:690.76px;font-size:16px;font-weight:400;color:#181e25;letter-spacing:0.743px;">marketing</div>
<div class="t" style="left:872.31px;top:667.76px;font-size:16px;font-weight:400;color:#181e25;letter-spacing:1.500px;">480</div>
<svg style="position:absolute;left:915px;top:653px;" width="50" height="40" viewBox="0 0 50 40" fill="none"><polygon points="6.9,22.8 10.2,21.5 20.0,21.5 23.5,20.6 26.8,21.9 30.2,16.6 33.5,17.5 37.2,14.0 40.6,22.2 44.1,18.6 47,25.5 6.9,25.5" fill="#dfeefb"/><polyline points="6.9,22.8 10.2,21.5 20.0,21.5 23.5,20.6 26.8,21.9 30.2,16.6 33.5,17.5 37.2,14.0 40.6,22.2 44.1,18.6" stroke="#4aa6f4" stroke-width="1.3" stroke-linejoin="round" stroke-linecap="round" fill="none"/></svg>
<div class="t" style="left:1014.71px;top:667.76px;font-size:16px;font-weight:400;color:#181e25;letter-spacing:2.000px;">20</div>
<div class="t" style="left:1065.00px;top:667.76px;font-size:16px;font-weight:400;color:#181e25;letter-spacing:0.800px;">26</div>
<div style="position:absolute;left:1092px;top:668.0999999999999px;width:14px;height:14px;border-radius:50%;background:#5cd6a5;"></div>
<div class="t" style="left:1120.57px;top:667.76px;font-size:16px;font-weight:400;color:#181e25;letter-spacing:1.100px;">15.36</div>
<div class="t" style="left:1197.35px;top:667.76px;font-size:16px;font-weight:400;color:#181e25;letter-spacing:1.300px;">0.11</div>
<div style="position:absolute;left:1241px;top:658.3px;width:119px;height:40px;overflow:hidden;">
<svg style="position:absolute;left:48.17px;top:10.75px;" width="18.25" height="11.5" viewBox="0 0 18.25 11.5" fill="none"><path d="M7.4 0.85 H5.75 A4.9 4.9 0 0 0 5.75 10.65 H7.4" stroke="#8f939e" stroke-width="1.7"/><path d="M10.85 0.85 H12.5 A4.9 4.9 0 0 1 12.5 10.65 H10.85" stroke="#8f939e" stroke-width="1.7"/><path d="M6.2 5.75 H12" stroke="#8f939e" stroke-width="1.7" stroke-linecap="round"/></svg>
<svg style="position:absolute;left:73.05px;top:9.75px;" width="15.5" height="13" viewBox="0 0 15.5 13" fill="none"><rect x="0.8" y="0.8" width="13.9" height="11.4" stroke="#8f939e" stroke-width="1.6"/><path d="M5.8 3.4 L11.4 6.5 L5.8 9.6 Z" fill="#8f939e"/></svg>
<svg style="position:absolute;left:95.05px;top:8.5px;" width="18.5" height="16" viewBox="0 0 18.5 16" fill="none"><path d="M0.85 1 H7.9 M10.6 1 H17.65 M0.85 5.75 H7.9 M10.6 5.75 H17.65 M0.85 10.4 H7.9 M10.6 10.4 H17.65 M0.85 15.2 H7.9 M10.6 15.2 H17.65" stroke="#8f939e" stroke-width="1.7" stroke-linecap="round"/></svg>
</div>
<div class="t" style="left:1374.00px;top:667.76px;font-size:16px;font-weight:400;color:#6c6e79;letter-spacing:0.522px;">n/a</div>
<div class="t" style="left:1457.00px;top:667.76px;font-size:16px;font-weight:400;color:#181e25;letter-spacing:0.976px;">Now</div>
<svg style="position:absolute;left:1497px;top:669.3px;" width="17" height="13" viewBox="0 0 17 13" fill="none"><path d="M2 7 L6 11 L15 2" stroke="#00845a" stroke-width="2.2" stroke-linecap="round" stroke-linejoin="round"/></svg>
<svg style="position:absolute;left:1534px;top:666.3px;" width="18" height="20" viewBox="0 0 18 20" fill="none"><g stroke="#a0a3ad" stroke-width="2.2" stroke-linejoin="round"><path d="M2.5 4.5 H15.5"/><path d="M6.5 4 V2 H11.5 V4"/><path d="M4.5 4.5 V17 H13.5 V4.5"/></g></svg>
<div style="position:absolute;left:20px;top:726.1px;width:1549px;height:1.0px;box-sizing:border-box;background:#e4e5ea;"></div>
<div style="position:absolute;left:36px;top:744.1px;width:19px;height:19.0px;box-sizing:border-box;background:#fff;border:1.5px solid #c4c7cf;border-radius:5px;"></div>
<svg style="position:absolute;left:75px;top:745.1px;" width="17" height="13" viewBox="0 0 17 13" fill="none"><rect width="17" height="12.7" rx="0.8" fill="#f54b4d"/><rect x="0" y="7.3" width="9" height="0.8" fill="#f88"/><rect width="8.8" height="6.8" fill="#3f42b4"/><rect x="1.2" y="1.2" width="6.4" height="4.4" fill="#5255bd"/></svg>
<div class="t" style="left:98.00px;top:744.56px;font-size:16px;font-weight:400;color:#006dca;letter-spacing:0.720px;">opt in email marketing</div>
<div style="position:absolute;left:689.4px;top:743.9px;width:18.5px;height:18.5px;border-radius:3px;background:#c4e5fe;color:#0a5dc2;font-size:14px;font-weight:400;-webkit-text-stroke:0.55px #0a5dc2;line-height:19px;text-align:center;">I</div>
<div class="t" style="left:749.80px;top:745.56px;font-size:16px;font-weight:400;color:#181e25;letter-spacing:0.800px;">email</div>
<div class="t" style="left:749.80px;top:768.56px;font-size:16px;font-weight:400;color:#181e25;letter-spacing:0.743px;">marketing</div>
<div class="t" style="left:872.31px;top:745.56px;font-size:16px;font-weight:400;color:#181e25;letter-spacing:1.500px;">390</div>
<svg style="position:absolute;left:915px;top:730px;" width="50" height="40" viewBox="0 0 50 40" fill="none"><polygon points="6.9,22.4 9.8,20.6 13.5,22.4 20.0,20.8 26.6,20.8 30.6,14.6 33.9,14.6 37.2,23.0 40.5,19.7 44.1,25.5 47,26.2 6.9,26.2" fill="#dfeefb"/><polyline points="6.9,22.4 9.8,20.6 13.5,22.4 20.0,20.8 26.6,20.8 30.6,14.6 33.9,14.6 37.2,23.0 40.5,19.7 44.1,25.5" stroke="#4aa6f4" stroke-width="1.3" stroke-linejoin="round" stroke-linecap="round" fill="none"/></svg>
<div class="t" style="left:1014.71px;top:745.56px;font-size:16px;font-weight:400;color:#181e25;letter-spacing:2.000px;">20</div>
<div class="t" style="left:1065.00px;top:745.56px;font-size:16px;font-weight:400;color:#181e25;letter-spacing:0.800px;">36</div>
<div style="position:absolute;left:1092px;top:745.9px;width:14px;height:14px;border-radius:50%;background:#fdbf33;"></div>
<div class="t" style="left:1120.57px;top:745.56px;font-size:16px;font-weight:400;color:#181e25;letter-spacing:1.100px;">23.62</div>
<div class="t" style="left:1196.16px;top:745.56px;font-size:16px;font-weight:400;color:#181e25;letter-spacing:1.300px;">0.28</div>
<div class="t" style="left:1336.86px;top:745.56px;font-size:16px;font-weight:400;color:#6c6e79;letter-spacing:-0.600px;">+1</div>
<div style="position:absolute;left:1337.5px;top:763.1px;width:17.2px;height:1px;background:repeating-linear-gradient(to right,#6f727d 0 3px,transparent 3px 5px);"></div>
<div style="position:absolute;left:1241px;top:736.1px;width:119px;height:40px;overflow:hidden;">
<svg style="position:absolute;left:-1.62px;top:10.75px;" width="18.25" height="11.5" viewBox="0 0 18.25 11.5" fill="none"><path d="M7.4 0.85 H5.75 A4.9 4.9 0 0 0 5.75 10.65 H7.4" stroke="#8f939e" stroke-width="1.7"/><path d="M10.85 0.85 H12.5 A4.9 4.9 0 0 1 12.5 10.65 H10.85" stroke="#8f939e" stroke-width="1.7"/><path d="M6.2 5.75 H12" stroke="#8f939e" stroke-width="1.7" stroke-linecap="round"/></svg>
<svg style="position:absolute;left:23.25px;top:9.75px;" width="15.5" height="13" viewBox="0 0 15.5 13" fill="none"><rect x="0.8" y="0.8" width="13.9" height="11.4" stroke="#8f939e" stroke-width="1.6"/><path d="M5.8 3.4 L11.4 6.5 L5.8 9.6 Z" fill="#8f939e"/></svg>
<svg style="position:absolute;left:46.12px;top:7.199999999999999px;" width="16.75" height="17" viewBox="0 0 16.75 17" fill="none"><path d="M3.2 0.6 H14.5 M3.2 3.1 H14.5" stroke="#8f939e" stroke-width="1.1" opacity="0.8"/><rect x="0.8" y="5.8" width="15.15" height="10.2" stroke="#8f939e" stroke-width="1.6"/><text x="8.4" y="13.6" font-size="6.6" text-anchor="middle" fill="#8f939e" font-family="Liberation Sans">AD</text></svg>
<svg style="position:absolute;left:68.75px;top:8.5px;" width="18.5" height="16" viewBox="0 0 18.5 16" fill="none"><path d="M0.85 1 H7.9 M10.6 1 H17.65 M0.85 5.75 H7.9 M10.6 5.75 H17.65 M0.85 10.4 H7.9 M10.6 10.4 H17.65 M0.85 15.2 H7.9 M10.6 15.2 H17.65" stroke="#8f939e" stroke-width="1.7" stroke-linecap="round"/></svg>
</div>
<div class="t" style="left:1374.00px;top:745.56px;font-size:16px;font-weight:400;color:#6c6e79;letter-spacing:0.522px;">n/a</div>
<div class="t" style="left:1457.00px;top:745.56px;font-size:16px;font-weight:400;color:#181e25;letter-spacing:0.976px;">Now</div>
<svg style="position:absolute;left:1497px;top:747.1px;" width="17" height="13" viewBox="0 0 17 13" fill="none"><path d="M2 7 L6 11 L15 2" stroke="#00845a" stroke-width="2.2" stroke-linecap="round" stroke-linejoin="round"/></svg>
<svg style="position:absolute;left:1534px;top:744.1px;" width="18" height="20" viewBox="0 0 18 20" fill="none"><g stroke="#a0a3ad" stroke-width="2.2" stroke-linejoin="round"><path d="M2.5 4.5 H15.5"/><path d="M6.5 4 V2 H11.5 V4"/><path d="M4.5 4.5 V17 H13.5 V4.5"/></g></svg>
<div style="position:absolute;left:20px;top:803.9px;width:1549px;height:1.0px;box-sizing:border-box;background:#e4e5ea;"></div>
<div style="position:absolute;left:36px;top:821.9px;width:19px;height:19.0px;box-sizing:border-box;background:#fff;border:1.5px solid #c4c7cf;border-radius:5px;"></div>
<svg style="position:absolute;left:75px;top:822.9px;" width="17" height="13" viewBox="0 0 17 13" fill="none"><rect width="17" height="12.7" rx="0.8" fill="#f54b4d"/><rect x="0" y="7.3" width="9" height="0.8" fill="#f88"/><rect width="8.8" height="6.8" fill="#3f42b4"/><rect x="1.2" y="1.2" width="6.4" height="4.4" fill="#5255bd"/></svg>
<div class="t" style="left:98.00px;top:822.36px;font-size:16px;font-weight:400;color:#006dca;letter-spacing:0.720px;">email marketing and seo</div>
<div style="position:absolute;left:689.4px;top:821.6999999999999px;width:18.5px;height:18.5px;border-radius:3px;background:#c4e5fe;color:#0a5dc2;font-size:14px;font-weight:400;-webkit-text-stroke:0.55px #0a5dc2;line-height:19px;text-align:center;">I</div>
<div class="t" style="left:749.80px;top:823.36px;font-size:16px;font-weight:400;color:#181e25;letter-spacing:0.800px;">email</div>
<div class="t" style="left:749.80px;top:846.36px;font-size:16px;font-weight:400;color:#181e25;letter-spacing:0.743px;">marketing</div>
<div class="t" style="left:872.31px;top:823.36px;font-size:16px;font-weight:400;color:#181e25;letter-spacing:1.500px;">480</div>
<svg style="position:absolute;left:915px;top:808px;" width="50" height="40" viewBox="0 0 50 40" fill="none"><polygon points="6.9,24.4 16.8,23.3 20.0,22.2 23.7,19.3 27.3,17.7 30.6,18.0 33.5,16.6 37.2,18.2 40.1,18.0 44.1,14.2 47,26.2 6.9,26.2" fill="#dfeefb"/><polyline points="6.9,24.4 16.8,23.3 20.0,22.2 23.7,19.3 27.3,17.7 30.6,18.0 33.5,16.6 37.2,18.2 40.1,18.0 44.1,14.2" stroke="#4aa6f4" stroke-width="1.3" stroke-linejoin="round" stroke-linecap="round" fill="none"/></svg>
<div class="t" style="left:1014.71px;top:823.36px;font-size:16px;font-weight:400;color:#181e25;letter-spacing:2.000px;">20</div>
<div class="t" style="left:1065.00px;top:823.36px;font-size:16px;font-weight:400;color:#181e25;letter-spacing:0.800px;">16</div>
<div style="position:absolute;left:1092px;top:823.6999999999999px;width:14px;height:14px;border-radius:50%;background:#5cd6a5;"></div>
<div class="t" style="left:1120.57px;top:823.36px;font-size:16px;font-weight:400;color:#181e25;letter-spacing:1.100px;">12.12</div>
<div class="t" style="left:1196.16px;top:823.36px;font-size:16px;font-weight:400;color:#181e25;letter-spacing:1.300px;">0.05</div>
<div class="t" style="left:1334.96px;top:823.36px;font-size:16px;font-weight:400;color:#6c6e79;letter-spacing:1.300px;">+2</div>
<div style="position:absolute;left:1333.7px;top:840.9px;width:21.0px;height:1px;background:repeating-linear-gradient(to right,#6f727d 0 3px,transparent 3px 5px);"></div>
<div style="position:absolute;left:1241px;top:813.9px;width:119px;height:40px;overflow:hidden;">
<svg style="position:absolute;left:-5.42px;top:10.75px;" width="18.25" height="11.5" viewBox="0 0 18.25 11.5" fill="none"><path d="M7.4 0.85 H5.75 A4.9 4.9 0 0 0 5.75 10.65 H7.4" stroke="#8f939e" stroke-width="1.7"/><path d="M10.85 0.85 H12.5 A4.9 4.9 0 0 1 12.5 10.65 H10.85" stroke="#8f939e" stroke-width="1.7"/><path d="M6.2 5.75 H12" stroke="#8f939e" stroke-width="1.7" stroke-linecap="round"/></svg>
<svg style="position:absolute;left:19.45px;top:9.75px;" width="15.5" height="13" viewBox="0 0 15.5 13" fill="none"><rect x="0.8" y="0.8" width="13.9" height="11.4" stroke="#8f939e" stroke-width="1.6"/><path d="M5.8 3.4 L11.4 6.5 L5.8 9.6 Z" fill="#8f939e"/></svg>
<svg style="position:absolute;left:42.33px;top:7.199999999999999px;" width="16.75" height="17" viewBox="0 0 16.75 17" fill="none"><path d="M3.2 0.6 H14.5 M3.2 3.1 H14.5" stroke="#8f939e" stroke-width="1.1" opacity="0.8"/><rect x="0.8" y="5.8" width="15.15" height="10.2" stroke="#8f939e" stroke-width="1.6"/><text x="8.4" y="13.6" font-size="6.6" text-anchor="middle" fill="#8f939e" font-family="Liberation Sans">AD</text></svg>
<svg style="position:absolute;left:66.20px;top:8.25px;" width="16" height="17" viewBox="0 0 16 17" fill="none"><path d="M0.85 0.85 H15.15 V13.2 H6.2 L0.85 16.4 Z" stroke="#8f939e" stroke-width="1.7" stroke-linejoin="round"/><text x="8.2" y="10.2" font-size="7.5" text-anchor="middle" fill="#8f939e" font-family="Liberation Sans">?</text></svg>
</div>
<div class="t" style="left:1374.00px;top:823.36px;font-size:16px;font-weight:400;color:#6c6e79;letter-spacing:0.522px;">n/a</div>
<div class="t" style="left:1457.00px;top:823.36px;font-size:16px;font-weight:400;color:#181e25;letter-spacing:0.976px;">Now</div>
<svg style="position:absolute;left:1497px;top:824.9px;" width="17" height="13" viewBox="0 0 17 13" fill="none"><path d="M2 7 L6 11 L15 2" stroke="#00845a" stroke-width="2.2" stroke-linecap="round" stroke-linejoin="round"/></svg>
<svg style="position:absolute;left:1534px;top:821.9px;" width="18" height="20" viewBox="0 0 18 20" fill="none"><g stroke="#a0a3ad" stroke-width="2.2" stroke-linejoin="round"><path d="M2.5 4.5 H15.5"/><path d="M6.5 4 V2 H11.5 V4"/><path d="M4.5 4.5 V17 H13.5 V4.5"/></g></svg>
<div style="position:absolute;left:20px;top:881.7px;width:1549px;height:1.0px;box-sizing:border-box;background:#e4e5ea;"></div>
<div style="position:absolute;left:36px;top:899.7px;width:19px;height:19.0px;box-sizing:border-box;background:#fff;border:1.5px solid #c4c7cf;border-radius:5px;"></div>
<svg style="position:absolute;left:75px;top:900.7px;" width="17" height="13" viewBox="0 0 17 13" fill="none"><rect width="17" height="12.7" rx="0.8" fill="#f54b4d"/><rect x="0" y="7.3" width="9" height="0.8" fill="#f88"/><rect width="8.8" height="6.8" fill="#3f42b4"/><rect x="1.2" y="1.2" width="6.4" height="4.4" fill="#5255bd"/></svg>
<div class="t" style="left:98.00px;top:900.16px;font-size:16px;font-weight:400;color:#006dca;letter-spacing:0.720px;">crm with email marketing</div>
<div style="position:absolute;left:689.4px;top:899.5px;width:18.5px;height:18.5px;border-radius:3px;background:#c4e5fe;color:#0a5dc2;font-size:14px;font-weight:400;-webkit-text-stroke:0.55px #0a5dc2;line-height:19px;text-align:center;">I</div>
<div style="position:absolute;left:712.9px;top:899.5px;width:18.5px;height:18.5px;border-radius:3px;background:#fcd66b;color:#a3530a;font-size:14px;font-weight:400;-webkit-text-stroke:0.55px #a3530a;line-height:19px;text-align:center;">C</div>
<div class="t" style="left:749.80px;top:901.16px;font-size:16px;font-weight:400;color:#181e25;letter-spacing:0.800px;">email</div>
<div class="t" style="left:749.80px;top:924.16px;font-size:16px;font-weight:400;color:#181e25;letter-spacing:0.743px;">marketing</div>
<div class="t" style="left:872.31px;top:901.16px;font-size:16px;font-weight:400;color:#181e25;letter-spacing:1.500px;">390</div>
<svg style="position:absolute;left:915px;top:886px;" width="50" height="40" viewBox="0 0 50 40" fill="none"><polygon points="6.9,24.2 10.2,23.9 16.4,22.4 20.0,23.5 23.5,21.9 26.8,24.4 30.4,14.4 33.5,21.5 37.2,24.4 40.5,20.4 44.1,25.1 47,25.9 6.9,25.9" fill="#dfeefb"/><polyline points="6.9,24.2 10.2,23.9 16.4,22.4 20.0,23.5 23.5,21.9 26.8,24.4 30.4,14.4 33.5,21.5 37.2,24.4 40.5,20.4 44.1,25.1" stroke="#4aa6f4" stroke-width="1.3" stroke-linejoin="round" stroke-linecap="round" fill="none"/></svg>
<div class="t" style="left:1014.71px;top:901.16px;font-size:16px;font-weight:400;color:#181e25;letter-spacing:2.000px;">20</div>
<div class="t" style="left:1065.00px;top:901.16px;font-size:16px;font-weight:400;color:#181e25;letter-spacing:0.800px;">45</div>
<div style="position:absolute;left:1092px;top:901.5px;width:14px;height:14px;border-radius:50%;background:#fdbf33;"></div>
<div class="t" style="left:1120.57px;top:901.16px;font-size:16px;font-weight:400;color:#181e25;letter-spacing:1.100px;">24.21</div>
<div class="t" style="left:1196.16px;top:901.16px;font-size:16px;font-weight:400;color:#181e25;letter-spacing:1.300px;">0.38</div>
<div class="t" style="left:1334.96px;top:901.16px;font-size:16px;font-weight:400;color:#6c6e79;letter-spacing:1.300px;">+2</div>
<div style="position:absolute;left:1333.7px;top:918.7px;width:21.0px;height:1px;background:repeating-linear-gradient(to right,#6f727d 0 3px,transparent 3px 5px);"></div>
<div style="position:absolute;left:1241px;top:891.7px;width:119px;height:40px;overflow:hidden;">
<svg style="position:absolute;left:-5.42px;top:10.75px;" width="18.25" height="11.5" viewBox="0 0 18.25 11.5" fill="none"><path d="M7.4 0.85 H5.75 A4.9 4.9 0 0 0 5.75 10.65 H7.4" stroke="#8f939e" stroke-width="1.7"/><path d="M10.85 0.85 H12.5 A4.9 4.9 0 0 1 12.5 10.65 H10.85" stroke="#8f939e" stroke-width="1.7"/><path d="M6.2 5.75 H12" stroke="#8f939e" stroke-width="1.7" stroke-linecap="round"/></svg>
<svg style="position:absolute;left:19.45px;top:9.75px;" width="15.5" height="13" viewBox="0 0 15.5 13" fill="none"><rect x="0.8" y="0.8" width="13.9" height="11.4" stroke="#8f939e" stroke-width="1.6"/><path d="M5.8 3.4 L11.4 6.5 L5.8 9.6 Z" fill="#8f939e"/></svg>
<svg style="position:absolute;left:42.33px;top:7.199999999999999px;" width="16.75" height="17" viewBox="0 0 16.75 17" fill="none"><path d="M3.2 0.6 H14.5 M3.2 3.1 H14.5" stroke="#8f939e" stroke-width="1.1" opacity="0.8"/><rect x="0.8" y="5.8" width="15.15" height="10.2" stroke="#8f939e" stroke-width="1.6"/><text x="8.4" y="13.6" font-size="6.6" text-anchor="middle" fill="#8f939e" font-family="Liberation Sans">AD</text></svg>
<svg style="position:absolute;left:66.20px;top:9.5px;" width="16" height="16" viewBox="0 0 16 16" fill="none"><circle cx="8" cy="8" r="7.1" stroke="#8f939e" stroke-width="1.7"/><path d="M5.8 4.8 L11.4 8 L5.8 11.2 Z" fill="#8f939e"/></svg>
</div>
<div class="t" style="left:1374.00px;top:901.16px;font-size:16px;font-weight:400;color:#6c6e79;letter-spacing:0.522px;">n/a</div>
<div class="t" style="left:1457.00px;top:901.16px;font-size:16px;font-weight:400;color:#181e25;letter-spacing:0.976px;">Now</div>
<svg style="position:absolute;left:1497px;top:902.7px;" width="17" height="13" viewBox="0 0 17 13" fill="none"><path d="M2 7 L6 11 L15 2" stroke="#00845a" stroke-width="2.2" stroke-linecap="round" stroke-linejoin="round"/></svg>
<svg style="position:absolute;left:1534px;top:899.7px;" width="18" height="20" viewBox="0 0 18 20" fill="none"><g stroke="#a0a3ad" stroke-width="2.2" stroke-linejoin="round"><path d="M2.5 4.5 H15.5"/><path d="M6.5 4 V2 H11.5 V4"/><path d="M4.5 4.5 V17 H13.5 V4.5"/></g></svg>
<div style="position:absolute;left:20px;top:959.5px;width:1549px;height:1.0px;box-sizing:border-box;background:#e4e5ea;"></div>
<div style="position:absolute;left:36px;top:977.5px;width:19px;height:19.0px;box-sizing:border-box;background:#fff;border:1.5px solid #c4c7cf;border-radius:5px;"></div>
<svg style="position:absolute;left:75px;top:978.5px;" width="17" height="13" viewBox="0 0 17 13" fill="none"><rect width="17" height="12.7" rx="0.8" fill="#f54b4d"/><rect x="0" y="7.3" width="9" height="0.8" fill="#f88"/><rect width="8.8" height="6.8" fill="#3f42b4"/><rect x="1.2" y="1.2" width="6.4" height="4.4" fill="#5255bd"/></svg>
<div class="t" style="left:98.00px;top:977.96px;font-size:16px;font-weight:400;color:#006dca;letter-spacing:0.720px;">email and sms marketing</div>
<div style="position:absolute;left:689.4px;top:977.3px;width:18.5px;height:18.5px;border-radius:3px;background:#c4e5fe;color:#0a5dc2;font-size:14px;font-weight:400;-webkit-text-stroke:0.55px #0a5dc2;line-height:19px;text-align:center;">I</div>
<div class="t" style="left:749.80px;top:978.96px;font-size:16px;font-weight:400;color:#181e25;letter-spacing:0.800px;">email</div>
<div class="t" style="left:749.80px;top:1001.96px;font-size:16px;font-weight:400;color:#181e25;letter-spacing:0.743px;">marketing</div>
<div class="t" style="left:872.31px;top:978.96px;font-size:16px;font-weight:400;color:#181e25;letter-spacing:1.500px;">480</div>
<svg style="position:absolute;left:915px;top:964px;" width="50" height="40" viewBox="0 0 50 40" fill="none"><polygon points="6.9,21.1 9.8,20.0 13.5,20.4 17.1,15.9 20.0,16.2 23.5,14.0 27.0,16.0 30.4,17.9 33.5,17.5 37.2,19.0 40.5,14.0 44.1,16.0 47,25.9 6.9,25.9" fill="#dfeefb"/><polyline points="6.9,21.1 9.8,20.0 13.5,20.4 17.1,15.9 20.0,16.2 23.5,14.0 27.0,16.0 30.4,17.9 33.5,17.5 37.2,19.0 40.5,14.0 44.1,16.0" stroke="#4aa6f4" stroke-width="1.3" stroke-linejoin="round" stroke-linecap="round" fill="none"/></svg>
<div class="t" style="left:1014.71px;top:978.96px;font-size:16px;font-weight:400;color:#181e25;letter-spacing:2.000px;">20</div>
<div class="t" style="left:1065.00px;top:978.96px;font-size:16px;font-weight:400;color:#181e25;letter-spacing:0.800px;">34</div>
<div style="position:absolute;left:1092px;top:979.3px;width:14px;height:14px;border-radius:50%;background:#fdbf33;"></div>
<div class="t" style="left:1120.57px;top:978.96px;font-size:16px;font-weight:400;color:#181e25;letter-spacing:1.100px;">27.94</div>
<div class="t" style="left:1196.16px;top:978.96px;font-size:16px;font-weight:400;color:#181e25;letter-spacing:1.300px;">0.54</div>
<div class="t" style="left:1336.86px;top:978.96px;font-size:16px;font-weight:400;color:#6c6e79;letter-spacing:-0.600px;">+1</div>
<div style="position:absolute;left:1337.5px;top:996.5px;width:17.2px;height:1px;background:repeating-linear-gradient(to right,#6f727d 0 3px,transparent 3px 5px);"></div>
<div style="position:absolute;left:1241px;top:969.5px;width:119px;height:40px;overflow:hidden;">
<svg style="position:absolute;left:-1.62px;top:10.75px;" width="18.25" height="11.5" viewBox="0 0 18.25 11.5" fill="none"><path d="M7.4 0.85 H5.75 A4.9 4.9 0 0 0 5.75 10.65 H7.4" stroke="#8f939e" stroke-width="1.7"/><path d="M10.85 0.85 H12.5 A4.9 4.9 0 0 1 12.5 10.65 H10.85" stroke="#8f939e" stroke-width="1.7"/><path d="M6.2 5.75 H12" stroke="#8f939e" stroke-width="1.7" stroke-linecap="round"/></svg>
<svg style="position:absolute;left:23.25px;top:9.75px;" width="15.5" height="13" viewBox="0 0 15.5 13" fill="none"><rect x="0.8" y="0.8" width="13.9" height="11.4" stroke="#8f939e" stroke-width="1.6"/><path d="M5.8 3.4 L11.4 6.5 L5.8 9.6 Z" fill="#8f939e"/></svg>
<svg style="position:absolute;left:46.12px;top:7.199999999999999px;" width="16.75" height="17" viewBox="0 0 16.75 17" fill="none"><path d="M3.2 0.6 H14.5 M3.2 3.1 H14.5" stroke="#8f939e" stroke-width="1.1" opacity="0.8"/><rect x="0.8" y="5.8" width="15.15" height="10.2" stroke="#8f939e" stroke-width="1.6"/><text x="8.4" y="13.6" font-size="6.6" text-anchor="middle" fill="#8f939e" font-family="Liberation Sans">AD</text></svg>
<svg style="position:absolute;left:68.75px;top:8.5px;" width="18.5" height="16" viewBox="0 0 18.5 16" fill="none"><path d="M0.85 1 H7.9 M10.6 1 H17.65 M0.85 5.75 H7.9 M10.6 5.75 H17.65 M0.85 10.4 H7.9 M10.6 10.4 H17.65 M0.85 15.2 H7.9 M10.6 15.2 H17.65" stroke="#8f939e" stroke-width="1.7" stroke-linecap="round"/></svg>
</div>
<div class="t" style="left:1374.00px;top:978.96px;font-size:16px;font-weight:400;color:#6c6e79;letter-spacing:0.522px;">n/a</div>
<div class="t" style="left:1457.00px;top:978.96px;font-size:16px;font-weight:400;color:#181e25;letter-spacing:0.976px;">Now</div>
<svg style="position:absolute;left:1497px;top:980.5px;" width="17" height="13" viewBox="0 0 17 13" fill="none"><path d="M2 7 L6 11 L15 2" stroke="#00845a" stroke-width="2.2" stroke-linecap="round" stroke-linejoin="round"/></svg>
<svg style="position:absolute;left:1534px;top:977.5px;" width="18" height="20" viewBox="0 0 18 20" fill="none"><g stroke="#a0a3ad" stroke-width="2.2" stroke-linejoin="round"><path d="M2.5 4.5 H15.5"/><path d="M6.5 4 V2 H11.5 V4"/><path d="M4.5 4.5 V17 H13.5 V4.5"/></g></svg>
<div style="position:absolute;left:20px;top:1037.3px;width:1549px;height:1.0px;box-sizing:border-box;background:#e4e5ea;"></div>
<div style="position:absolute;left:36px;top:1055.3px;width:19px;height:19.0px;box-sizing:border-box;background:#fff;border:1.5px solid #c4c7cf;border-radius:5px;"></div>
<svg style="position:absolute;left:75px;top:1056.3px;" width="17" height="13" viewBox="0 0 17 13" fill="none"><rect width="17" height="12.7" rx="0.8" fill="#f54b4d"/><rect x="0" y="7.3" width="9" height="0.8" fill="#f88"/><rect width="8.8" height="6.8" fill="#3f42b4"/><rect x="1.2" y="1.2" width="6.4" height="4.4" fill="#5255bd"/></svg>
<div class="t" style="left:98.00px;top:1055.76px;font-size:16px;font-weight:400;color:#006dca;letter-spacing:0.720px;">email marketing customer journey</div>
<div style="position:absolute;left:689.4px;top:1055.1px;width:18.5px;height:18.5px;border-radius:3px;background:#c4e5fe;color:#0a5dc2;font-size:14px;font-weight:400;-webkit-text-stroke:0.55px #0a5dc2;line-height:19px;text-align:center;">I</div>
<div class="t" style="left:749.80px;top:1056.76px;font-size:16px;font-weight:400;color:#181e25;letter-spacing:0.800px;">email</div>
<div class="t" style="left:749.80px;top:1079.76px;font-size:16px;font-weight:400;color:#181e25;letter-spacing:0.743px;">marketing</div>
<div class="t" style="left:872.31px;top:1056.76px;font-size:16px;font-weight:400;color:#181e25;letter-spacing:1.500px;">720</div>
<svg style="position:absolute;left:915px;top:1042px;" width="50" height="40" viewBox="0 0 50 40" fill="none"><polygon points="6.9,24.8 10.0,21.9 13.5,24.4 23.3,25.1 27.7,23.7 32.8,22.4 37.2,23.9 40.1,23.7 44.1,25.1 47,26 6.9,26" fill="#dfeefb"/><polyline points="6.9,24.8 10.0,21.9 13.5,24.4 23.3,25.1 27.7,23.7 32.8,22.4 37.2,23.9 40.1,23.7 44.1,25.1" stroke="#4aa6f4" stroke-width="1.3" stroke-linejoin="round" stroke-linecap="round" fill="none"/></svg>
<div class="t" style="left:1014.71px;top:1056.76px;font-size:16px;font-weight:400;color:#181e25;letter-spacing:2.000px;">20</div>
<div class="t" style="left:1065.00px;top:1056.76px;font-size:16px;font-weight:400;color:#181e25;letter-spacing:0.800px;">29</div>
<div style="position:absolute;left:1092px;top:1057.1px;width:14px;height:14px;border-radius:50%;background:#5cd6a5;"></div>
<div class="t" style="left:1120.57px;top:1056.76px;font-size:16px;font-weight:400;color:#181e25;letter-spacing:1.100px;">10.35</div>
<div class="t" style="left:1196.16px;top:1056.76px;font-size:16px;font-weight:400;color:#181e25;letter-spacing:1.300px;">0.03</div>
<div style="position:absolute;left:1241px;top:1047.3px;width:119px;height:40px;overflow:hidden;">
<svg style="position:absolute;left:24.67px;top:10.75px;" width="18.25" height="11.5" viewBox="0 0 18.25 11.5" fill="none"><path d="M7.4 0.85 H5.75 A4.9 4.9 0 0 0 5.75 10.65 H7.4" stroke="#8f939e" stroke-width="1.7"/><path d="M10.85 0.85 H12.5 A4.9 4.9 0 0 1 12.5 10.65 H10.85" stroke="#8f939e" stroke-width="1.7"/><path d="M6.2 5.75 H12" stroke="#8f939e" stroke-width="1.7" stroke-linecap="round"/></svg>
<svg style="position:absolute;left:49.55px;top:9.75px;" width="15.5" height="13" viewBox="0 0 15.5 13" fill="none"><rect x="0.8" y="0.8" width="13.9" height="11.4" stroke="#8f939e" stroke-width="1.6"/><path d="M5.8 3.4 L11.4 6.5 L5.8 9.6 Z" fill="#8f939e"/></svg>
<svg style="position:absolute;left:71.55px;top:8.5px;" width="18.5" height="16" viewBox="0 0 18.5 16" fill="none"><path d="M0.85 1 H7.9 M10.6 1 H17.65 M0.85 5.75 H7.9 M10.6 5.75 H17.65 M0.85 10.4 H7.9 M10.6 10.4 H17.65 M0.85 15.2 H7.9 M10.6 15.2 H17.65" stroke="#8f939e" stroke-width="1.7" stroke-linecap="round"/></svg>
<svg style="position:absolute;left:95.30px;top:8px;" width="18" height="18" viewBox="0 0 18 18" fill="none"><path d="M9 0.3 Q10.1 7.9 17.7 9 Q10.1 10.1 9 17.7 Q7.9 10.1 0.3 9 Q7.9 7.9 9 0.3 Z" fill="#8f939e"/></svg>
</div>
<div class="t" style="left:1374.00px;top:1056.76px;font-size:16px;font-weight:400;color:#6c6e79;letter-spacing:0.522px;">n/a</div>
<div class="t" style="left:1457.00px;top:1056.76px;font-size:16px;font-weight:400;color:#181e25;letter-spacing:0.976px;">Now</div>
<svg style="position:absolute;left:1497px;top:1058.3px;" width="17" height="13" viewBox="0 0 17 13" fill="none"><path d="M2 7 L6 11 L15 2" stroke="#00845a" stroke-width="2.2" stroke-linecap="round" stroke-linejoin="round"/></svg>
<svg style="position:absolute;left:1534px;top:1055.3px;" width="18" height="20" viewBox="0 0 18 20" fill="none"><g stroke="#a0a3ad" stroke-width="2.2" stroke-linejoin="round"><path d="M2.5 4.5 H15.5"/><path d="M6.5 4 V2 H11.5 V4"/><path d="M4.5 4.5 V17 H13.5 V4.5"/></g></svg>
<div style="position:absolute;left:965px;top:270px;width:100px;height:850px;box-sizing:border-box;border:8px solid #b178f7;border-right-width:9px;border-bottom:none;"></div>
<div style="position:absolute;left:0px;top:1045px;width:1600px;height:53px;box-sizing:border-box;background:linear-gradient(to bottom, rgba(251,251,252,0) 0px, rgba(251,251,252,0.4) 18px, rgba(251,251,252,0.8) 36px, rgba(255,255,255,1) 47px);"></div>
</body></html>
